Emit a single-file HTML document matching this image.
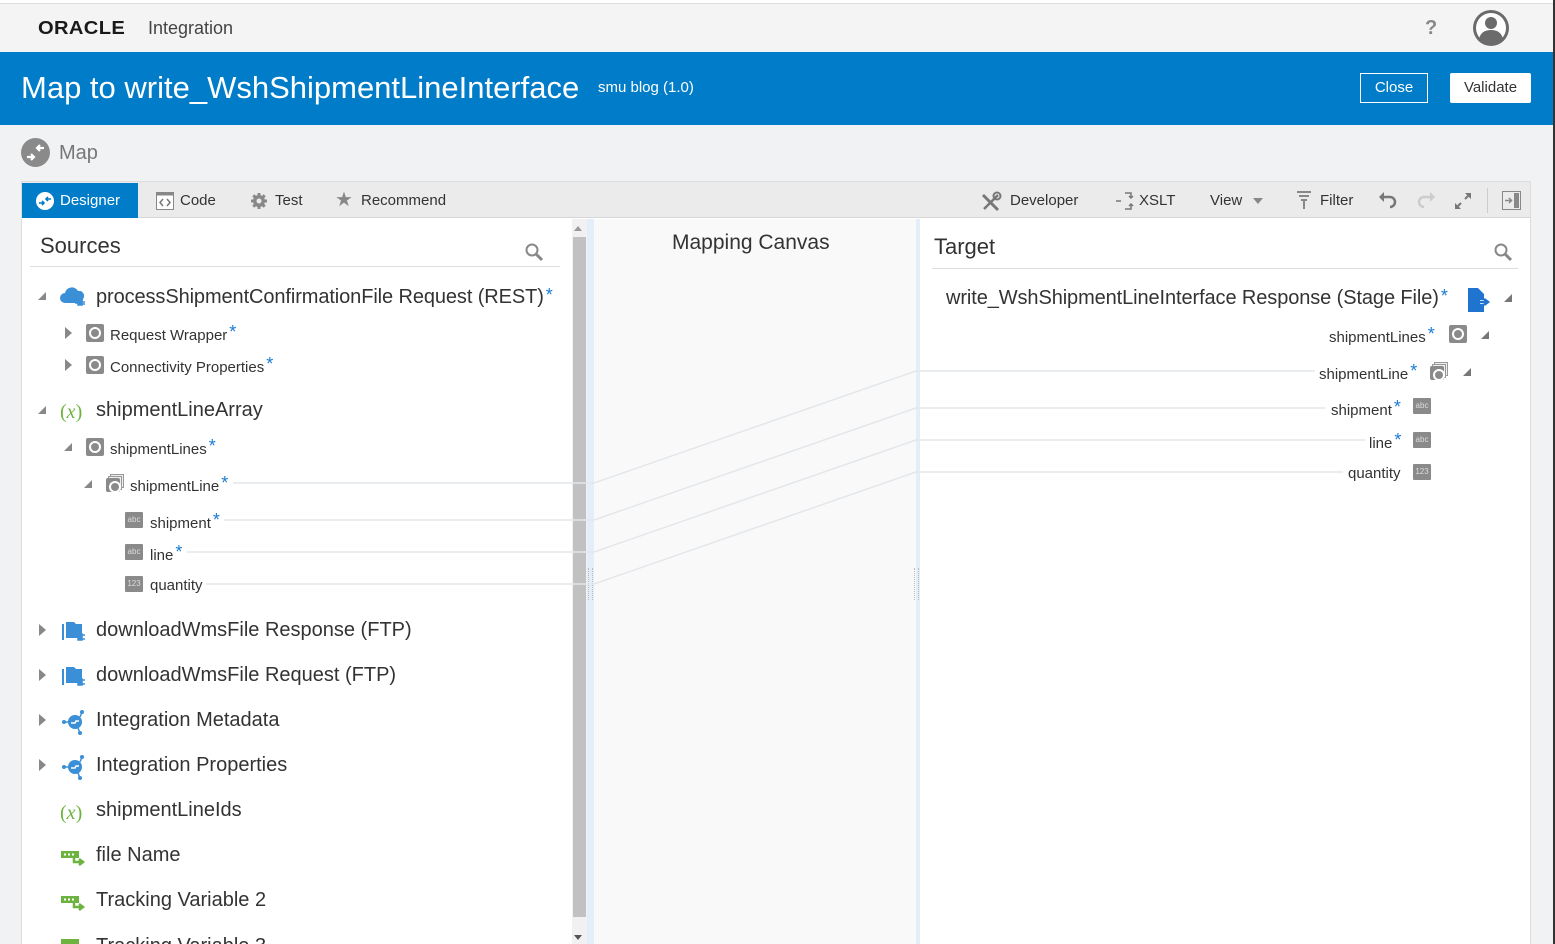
<!DOCTYPE html>
<html style="width:1555px;height:944px;overflow:hidden"><head><meta charset="utf-8">
<style>
*{margin:0;padding:0;box-sizing:border-box}
body{width:1555px;height:944px;overflow:hidden;background:#f1f2f3;font-family:"Liberation Sans",Arial,sans-serif;color:#333;position:relative}
.a{position:absolute;white-space:nowrap}
.t{position:absolute;white-space:nowrap;line-height:20px}
.s{color:#1a7bd0;font-size:18px;position:relative;top:-2px;margin-left:2px}
.ring{position:absolute;width:18px;height:18px;background:#8a8a8a;border-radius:2px}
.ring::after{content:"";position:absolute;left:3px;top:3px;width:12px;height:12px;border:2.5px solid #fff;border-radius:50%;box-sizing:border-box}
.multi{position:absolute;width:18px;height:18px}
.multi i{position:absolute;width:14px;height:14px;border:1px solid #999;background:#eee}
.abc{position:absolute;width:18px;height:16px;background:#8a8a8a;color:#ddd;font-size:8px;line-height:16px;text-align:center;border-radius:1px}
.tri{position:absolute;width:0;height:0}
.tri.open{border-right:8px solid #888;border-top:8px solid transparent}
.tri.closed{border-left:7px solid #888;border-top:6px solid transparent;border-bottom:6px solid transparent}
.tb{font-size:15px;color:#333}
</style></head><body>
<div class="a" style="left:0;top:0;width:1555px;height:3px;background:#fff"></div>
<div class="a" style="left:0;top:3px;width:1553px;height:1px;background:#ddd"></div>
<div class="a" style="left:0;top:4px;width:1553px;height:48px;background:#f4f4f5"></div>
<div class="a" style="left:1553px;top:0;width:2px;height:944px;background:#333"></div>
<div class="a" style="left:38px;top:17px;font-size:18px;font-weight:bold;letter-spacing:0.3px;color:#1a1a1a;line-height:22px;transform:scaleX(1.12);transform-origin:left">ORACLE</div>
<div class="a" style="left:148px;top:17px;font-size:18px;color:#444;line-height:22px">Integration</div>
<div class="a" style="left:1425px;top:16px;font-size:20px;color:#888;font-weight:bold;line-height:24px">?</div>
<svg class="a" style="left:1472px;top:9px" width="38" height="38" viewBox="0 0 38 38"><circle cx="19" cy="19" r="18" fill="#6b6b6b"/><circle cx="19" cy="19" r="15" fill="#fff"/><circle cx="19" cy="14" r="6" fill="#6b6b6b"/><path d="M7 30 Q9 21 19 21 Q29 21 31 30 Q25 35 19 35 Q13 35 7 30Z" fill="#6b6b6b"/></svg>
<div class="a" style="left:0;top:52px;width:1553px;height:73px;background:#007cc8"></div>
<div class="a" style="left:21px;top:70px;font-size:31px;color:#fff;line-height:36px">Map to write_WshShipmentLineInterface</div>
<div class="a" style="left:598px;top:79px;font-size:15px;color:#fff;line-height:18px">smu blog (1.0)</div>
<div class="a" style="left:1360px;top:73px;width:68px;height:30px;border:1px solid #fff;color:#fff;font-size:15px;line-height:28px;text-align:center">Close</div>
<div class="a" style="left:1450px;top:73px;width:81px;height:30px;background:#fff;color:#333;font-size:15px;line-height:30px;text-align:center;border-radius:2px">Validate</div>
<svg class="a" style="left:21px;top:138px" width="29" height="29" viewBox="0 0 29 29"><circle cx="14.5" cy="14.5" r="14.5" fill="#8a8a8a"/><path d="M6 19h7M10 16l3 3-3 3M23 10h-7M19 7l-3 3 3 3" stroke="#fff" stroke-width="2.2" fill="none"/></svg>
<div class="a" style="left:59px;top:141px;font-size:20px;color:#777;line-height:24px">Map</div>
<div class="a" style="left:21px;top:181px;width:1510px;height:763px;background:#fff;border:1px solid #ddd;border-bottom:0"></div>
<div class="a" style="left:22px;top:182px;width:1508px;height:36px;background:#ebebeb;border-bottom:1px solid #d6d6d6"></div>
<div class="a" style="left:22px;top:183px;width:116px;height:35px;background:#007cc8"></div>
<svg class="a" style="left:36px;top:192px" width="18" height="18" viewBox="0 0 18 18"><circle cx="9" cy="9" r="9" fill="#fff"/><path d="M3 11h5M6 9l2 2-2 2M15 7h-5M12 5l-2 2 2 2" stroke="#007cc8" stroke-width="1.6" fill="none"/></svg>
<div class="a tb" style="left:60px;top:191px;color:#fff;line-height:20px">Designer</div>
<svg class="a" style="left:156px;top:192px" width="18" height="18" viewBox="0 0 18 18"><rect x="0.5" y="0.5" width="17" height="17" fill="#fff" stroke="#888"/><rect x="0.5" y="0.5" width="17" height="3" fill="#888"/><path d="M7 7l-3 3.5 3 3.5M11 7l3 3.5-3 3.5" stroke="#777" stroke-width="1.5" fill="none"/></svg>
<div class="a tb" style="left:180px;top:191px;line-height:20px">Code</div>
<svg class="a" style="left:250px;top:192px" width="18" height="18" viewBox="0 0 18 18"><circle cx="9" cy="9" r="6" fill="#888"/><g stroke="#888" stroke-width="3"><path d="M9 1v16M1 9h16M3.3 3.3l11.4 11.4M14.7 3.3L3.3 14.7"/></g><circle cx="9" cy="9" r="2.5" fill="#ebebeb"/></svg>
<div class="a tb" style="left:275px;top:191px;line-height:20px">Test</div>
<div class="a" style="left:335px;top:189px;font-size:20px;color:#888;line-height:22px">★</div>
<div class="a tb" style="left:361px;top:191px;line-height:20px">Recommend</div>
<svg class="a" style="left:980px;top:191px" width="22" height="22" viewBox="0 0 22 22"><path d="M3 4l15 15" stroke="#777" stroke-width="3"/><path d="M18 4L4 18" stroke="#777" stroke-width="2.5"/><circle cx="17" cy="5" r="3.5" fill="none" stroke="#777" stroke-width="2"/></svg>
<div class="a tb" style="left:1010px;top:191px;line-height:20px">Developer</div>
<svg class="a" style="left:1115px;top:191px" width="22" height="20" viewBox="0 0 22 20"><path d="M1 10h5" stroke="#777" stroke-width="1.5"/><path d="M10 2h6v5M10 18h6v-5" stroke="#777" stroke-width="1.5" fill="none"/><path d="M14 5l2 2 2-2M14 15l2-2 2 2" stroke="#777" stroke-width="1.5" fill="none"/></svg>
<div class="a tb" style="left:1139px;top:191px;line-height:20px">XSLT</div>
<div class="a tb" style="left:1210px;top:191px;line-height:20px">View</div>
<div class="a" style="left:1253px;top:198px;border-left:5px solid transparent;border-right:5px solid transparent;border-top:6px solid #888"></div>
<svg class="a" style="left:1296px;top:191px" width="16" height="18" viewBox="0 0 16 18"><path d="M1 1h14M3 5h10M5 9h6" stroke="#888" stroke-width="2"/><path d="M7 9h2v9H7z" fill="#888"/></svg>
<div class="a tb" style="left:1320px;top:191px;line-height:20px">Filter</div>
<svg class="a" style="left:1378px;top:191px" width="20" height="18" viewBox="0 0 20 18"><path d="M4 6h8a5 5 0 010 10" stroke="#777" stroke-width="2.5" fill="none"/><path d="M1 6l5-5v10z" fill="#777"/></svg>
<svg class="a" style="left:1416px;top:191px" width="20" height="18" viewBox="0 0 20 18"><path d="M16 6H8a5 5 0 000 10" stroke="#ccc" stroke-width="2.5" fill="none"/><path d="M19 6l-5-5v10z" fill="#ccc"/></svg>
<svg class="a" style="left:1453px;top:191px" width="20" height="20" viewBox="0 0 20 20"><path d="M12 2h6v6zM2 12v6h6z" fill="#777"/><path d="M16 4l-4 4M4 16l4-4" stroke="#777" stroke-width="2"/></svg>
<div class="a" style="left:1487px;top:188px;width:1px;height:25px;background:#ccc"></div>
<svg class="a" style="left:1502px;top:191px" width="19" height="19" viewBox="0 0 19 19"><rect x="0.5" y="0.5" width="18" height="18" fill="none" stroke="#888"/><rect x="12" y="2" width="5" height="15" fill="#888"/><path d="M3 9.5h6M7 7l2.5 2.5L7 12" stroke="#888" stroke-width="1.5" fill="none"/></svg>

<div class="a" style="left:587px;top:219px;width:333px;height:725px;background:#e3eef9"></div>
<div class="a" style="left:594px;top:219px;width:322px;height:725px;background:#f9f9f9"></div>
<div class="a" style="left:672px;top:231px;font-size:21px;color:#333;line-height:24px">Mapping Canvas</div>
<div class="a" style="left:588px;top:568px;width:5px;height:32px;border-left:1px dotted #bbb;border-right:1px dotted #bbb"></div>
<div class="a" style="left:914px;top:568px;width:5px;height:32px;border-left:1px dotted #bbb;border-right:1px dotted #bbb"></div>
<div class="a" style="left:572px;top:219px;width:15px;height:725px;background:#f1f1f1"></div>
<div class="a" style="left:574px;top:226px;border-left:4px solid transparent;border-right:4px solid transparent;border-bottom:5px solid #999"></div>
<div class="a" style="left:573px;top:237px;width:13px;height:680px;background:#c1c1c1"></div>
<div class="a" style="left:574px;top:935px;border-left:4px solid transparent;border-right:4px solid transparent;border-top:5px solid #555"></div>

<svg class="a" style="left:0;top:0" width="1555" height="944">
<g stroke="#e3e7ec" stroke-width="1.5" fill="none">
<path d="M233 483H594L916 371H1315"/>
<path d="M224 520H594L916 408H1325"/>
<path d="M187 552H594L916 440H1365"/>
<path d="M206 584H594L916 472H1343"/>
</g></svg>

<div class="a" style="left:40px;top:233px;font-size:22px;line-height:26px;color:#333">Sources</div>
<svg class="a" style="left:524px;top:242px" width="20" height="20" viewBox="0 0 20 20"><circle cx="8" cy="8" r="5.5" stroke="#888" stroke-width="2" fill="none"/><path d="M12 12l6 6" stroke="#888" stroke-width="3"/></svg>
<div class="a" style="left:30px;top:266px;width:530px;height:1px;background:#ddd"></div>

<div class="tri open a" style="left:38px;top:292px"></div>
<svg class="a" style="left:60px;top:285px" width="28" height="24" viewBox="0 0 28 24"><path d="M5 18a5 5 0 010-10 7 7 0 0113-2 5 5 0 015 8 4 4 0 01-3 4z" fill="#3a8fd6"/><path d="M18 16h4v4h-4zM22 17h3M22 19h3M15 18h3" stroke="#3a8fd6" stroke-width="1.5" fill="#3a8fd6"/></svg>
<div class="t" style="left:96px;top:286px;font-size:20px;line-height:22px;letter-spacing:-0.1px">processShipmentConfirmationFile Request (REST)<span class="s">*</span></div>

<div class="tri closed a" style="left:65px;top:327px"></div>
<div class="ring" style="left:86px;top:324px"></div>
<div class="t" style="left:110px;top:324px;font-size:15px">Request Wrapper<span class="s">*</span></div>
<div class="tri closed a" style="left:65px;top:359px"></div>
<div class="ring" style="left:86px;top:356px"></div>
<div class="t" style="left:110px;top:356px;font-size:15px">Connectivity Properties<span class="s">*</span></div>

<div class="tri open a" style="left:38px;top:406px"></div>
<div class="t" style="left:60px;top:401px;font-size:20px;color:#6db33f;font-family:'Liberation Serif',serif;line-height:22px">(<i>x</i>)</div>
<div class="t" style="left:96px;top:399px;font-size:20px;line-height:22px">shipmentLineArray</div>
<div class="tri open a" style="left:64px;top:443px"></div>
<div class="ring" style="left:86px;top:438px"></div>
<div class="t" style="left:110px;top:438px;font-size:15px">shipmentLines<span class="s">*</span></div>
<div class="tri open a" style="left:84px;top:480px"></div>
<div class="multi" style="left:106px;top:474px"><i style="left:4px;top:0"></i><i style="left:2px;top:2px"></i><span class="ring" style="left:0;top:4px;width:14px;height:14px"></span></div>
<div class="t" style="left:130px;top:475px;font-size:15px">shipmentLine<span class="s">*</span></div>
<div class="abc" style="left:125px;top:512px">abc</div>
<div class="t" style="left:150px;top:512px;font-size:15px">shipment<span class="s">*</span></div>
<div class="abc" style="left:125px;top:544px">abc</div>
<div class="t" style="left:150px;top:544px;font-size:15px">line<span class="s">*</span></div>
<div class="abc" style="left:125px;top:576px">123</div>
<div class="t" style="left:150px;top:576px;font-size:15px">quantity</div>

<div class="tri closed a" style="left:39px;top:624px"></div>
<svg class="a" style="left:60px;top:620px" width="28" height="24" viewBox="0 0 28 24"><path d="M2 4h2v16H2zM6 2h8l2 2h6v14H6z" fill="#3a8fd6"/><path d="M18 14h4v6h-4zM22 15h3M22 19h3M15 17h3" stroke="#3a8fd6" stroke-width="1.5" fill="#3a8fd6"/></svg>
<div class="t" style="left:96px;top:619px;font-size:20px;line-height:22px">downloadWmsFile Response (FTP)</div>
<div class="tri closed a" style="left:39px;top:669px"></div>
<svg class="a" style="left:60px;top:665px" width="28" height="24" viewBox="0 0 28 24"><path d="M2 4h2v16H2zM6 2h8l2 2h6v14H6z" fill="#3a8fd6"/><path d="M18 14h4v6h-4zM22 15h3M22 19h3M15 17h3" stroke="#3a8fd6" stroke-width="1.5" fill="#3a8fd6"/></svg>
<div class="t" style="left:96px;top:664px;font-size:20px;line-height:22px">downloadWmsFile Request (FTP)</div>
<div class="tri closed a" style="left:39px;top:714px"></div>
<svg class="a" style="left:60px;top:709px" width="28" height="26" viewBox="0 0 28 26"><circle cx="15" cy="13" r="7" fill="#3a8fd6"/><circle cx="4" cy="13" r="2" fill="#3a8fd6"/><circle cx="22" cy="3" r="2" fill="#3a8fd6"/><circle cx="20" cy="24" r="2" fill="#3a8fd6"/><path d="M4 13h4M20 8l2-5M18 19l2 5" stroke="#3a8fd6" stroke-width="1.5"/><path d="M11 14h4l1-2h3" stroke="#fff" stroke-width="1.5" fill="none"/></svg>
<div class="t" style="left:96px;top:709px;font-size:20px;line-height:22px">Integration Metadata</div>
<div class="tri closed a" style="left:39px;top:759px"></div>
<svg class="a" style="left:60px;top:754px" width="28" height="26" viewBox="0 0 28 26"><circle cx="15" cy="13" r="7" fill="#3a8fd6"/><circle cx="4" cy="13" r="2" fill="#3a8fd6"/><circle cx="22" cy="3" r="2" fill="#3a8fd6"/><circle cx="20" cy="24" r="2" fill="#3a8fd6"/><path d="M4 13h4M20 8l2-5M18 19l2 5" stroke="#3a8fd6" stroke-width="1.5"/><path d="M11 14h4l1-2h3" stroke="#fff" stroke-width="1.5" fill="none"/></svg>
<div class="t" style="left:96px;top:754px;font-size:20px;line-height:22px">Integration Properties</div>
<div class="t" style="left:60px;top:802px;font-size:20px;color:#6db33f;font-family:'Liberation Serif',serif;line-height:22px">(<i>x</i>)</div>
<div class="t" style="left:96px;top:799px;font-size:20px;line-height:22px">shipmentLineIds</div>
<svg class="a" style="left:60px;top:848px" width="28" height="20" viewBox="0 0 28 20"><rect x="1" y="3" width="18" height="7" fill="#6db33f"/><path d="M4 6.5h2M8 6.5h2M12 6.5h2" stroke="#fff" stroke-width="2"/><path d="M14 10v4h8M19 11l4 3-4 3" stroke="#6db33f" stroke-width="2.5" fill="none"/></svg>
<div class="t" style="left:96px;top:844px;font-size:20px;line-height:22px">file Name</div>
<svg class="a" style="left:60px;top:893px" width="28" height="20" viewBox="0 0 28 20"><rect x="1" y="3" width="18" height="7" fill="#6db33f"/><path d="M4 6.5h2M8 6.5h2M12 6.5h2" stroke="#fff" stroke-width="2"/><path d="M14 10v4h8M19 11l4 3-4 3" stroke="#6db33f" stroke-width="2.5" fill="none"/></svg>
<div class="t" style="left:96px;top:889px;font-size:20px;line-height:22px">Tracking Variable 2</div>
<svg class="a" style="left:60px;top:938px" width="28" height="20" viewBox="0 0 28 20"><rect x="1" y="1" width="18" height="7" fill="#6db33f"/></svg>
<div class="t" style="left:96px;top:935px;font-size:20px;line-height:22px">Tracking Variable 3</div>

<div class="a" style="left:934px;top:234px;font-size:22px;line-height:26px;color:#333">Target</div>
<svg class="a" style="left:1493px;top:242px" width="20" height="20" viewBox="0 0 20 20"><circle cx="8" cy="8" r="5.5" stroke="#888" stroke-width="2" fill="none"/><path d="M12 12l6 6" stroke="#888" stroke-width="3"/></svg>
<div class="a" style="left:932px;top:268px;width:586px;height:1px;background:#ddd"></div>
<div class="t" style="left:946px;top:287px;font-size:20px;line-height:22px;letter-spacing:-0.1px">write_WshShipmentLineInterface Response (Stage File)<span class="s">*</span></div>
<svg class="a" style="left:1467px;top:287px" width="24" height="26" viewBox="0 0 24 26"><path d="M1 1h10l6 6v6h-4v4h4v8H1z" fill="#1f74cf"/><path d="M13 15h7M17 12l4 3-4 3" stroke="#1f74cf" stroke-width="2.5" fill="none"/></svg>
<div class="a" style="left:1504px;top:294px;border-right:8px solid #777;border-top:8px solid transparent"></div>

<div class="t" style="left:1329px;top:326px;font-size:15px">shipmentLines<span class="s">*</span></div>
<div class="ring" style="left:1449px;top:325px"></div>
<div class="a" style="left:1481px;top:331px;border-right:8px solid #777;border-top:8px solid transparent"></div>
<div class="t" style="left:1319px;top:363px;font-size:15px">shipmentLine<span class="s">*</span></div>
<div class="multi" style="left:1430px;top:362px"><i style="left:4px;top:0"></i><i style="left:2px;top:2px"></i><span class="ring" style="left:0;top:4px;width:14px;height:14px"></span></div>
<div class="a" style="left:1463px;top:368px;border-right:8px solid #777;border-top:8px solid transparent"></div>
<div class="t" style="left:1331px;top:399px;font-size:15px">shipment<span class="s">*</span></div>
<div class="abc" style="left:1413px;top:398px">abc</div>
<div class="t" style="left:1369px;top:432px;font-size:15px">line<span class="s">*</span></div>
<div class="abc" style="left:1413px;top:432px">abc</div>
<div class="t" style="left:1348px;top:464px;font-size:15px">quantity</div>
<div class="abc" style="left:1413px;top:464px">123</div>
</body></html>
